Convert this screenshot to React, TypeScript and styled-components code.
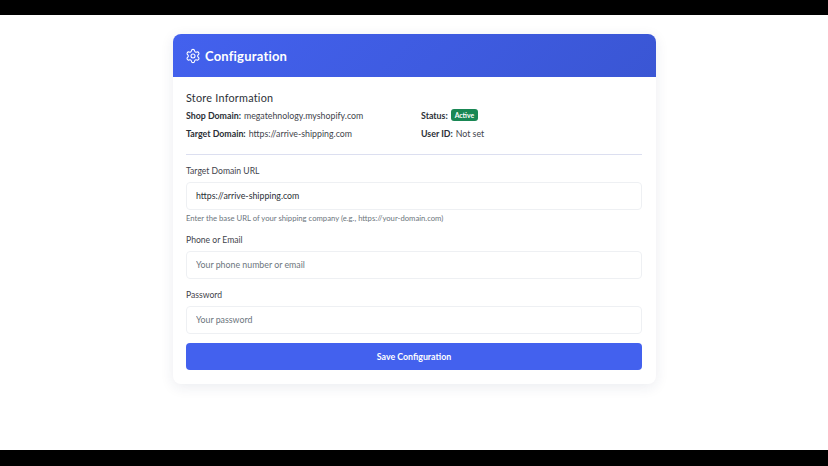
import React from 'react';
import styled, { createGlobalStyle } from 'styled-components';
import { Settings } from 'lucide-react';

const GlobalStyle = createGlobalStyle`
  html, body {
    margin: 0;
    height: 100%;
    background: #000;
    font-family: Lato, "Noto Sans", sans-serif;
  }
  #root {
    height: 100%;
  }
`;

const Screen = styled.div`
  height: 466px;
  display: flex;
  flex-direction: column;
  background: #000;
`;

const Page = styled.main`
  margin-top: 15px;
  height: 435px;
  box-sizing: border-box;
  padding-top: 19px;
  background: #fff;
  display: flex;
  flex-direction: column;
  align-items: center;
`;

const Card = styled.section`
  width: 483px;
  height: 350px;
  margin-left: 1px;
  border-radius: 8px;
  background: #fff;
  overflow: hidden;
  box-shadow: 0 3px 14px rgba(30, 40, 90, 0.09);
`;

const CardHeader = styled.header`
  height: 43px;
  padding: 0 12px;
  display: flex;
  align-items: center;
  gap: 4px;
  background: linear-gradient(135deg, #4361ee, #3a56d4);
  color: #fff;
`;

const CardTitle = styled.h1`
  margin: 0;
  font-size: 13px;
  font-weight: 700;
  line-height: 18px;
  letter-spacing: 0.2px;
`;

const CardBody = styled.div`
  padding: 13px 14px 13px 13px;
`;

const SectionTitle = styled.h2`
  margin: 0 0 2px;
  font-size: 10.8px;
  font-weight: 400;
  line-height: 16px;
  letter-spacing: 0.25px;
  color: #2b2f36;
`;

const InfoGrid = styled.div`
  display: grid;
  grid-template-columns: 235px 1fr;
  row-gap: 4px;
  padding-bottom: 14px;
  border-bottom: 1px solid #dcdff0;
  margin-bottom: 9px;
`;

const InfoItem = styled.div`
  display: flex;
  align-items: center;
  gap: 3px;
  height: 14px;
  font-size: 8.8px;
  color: #3f444c;
`;

const InfoLabel = styled.strong`
  font-weight: 700;
  color: #2b2f36;
`;

const Badge = styled.span`
  display: inline-flex;
  align-items: center;
  height: 12px;
  padding: 0 4px;
  border-radius: 3px;
  background: #198754;
  color: #fff;
  font-size: 6.8px;
  font-weight: 700;
`;

const Field = styled.div`
  margin-bottom: 9px;
`;

const FieldLabel = styled.label`
  display: block;
  padding-top: 1px;
  margin-bottom: 4px;
  font-size: 8.6px;
  line-height: 13px;
  color: #3f444c;
`;

const TextInput = styled.input`
  display: block;
  width: 100%;
  height: 28px;
  box-sizing: border-box;
  padding: 0 9px 2px;
  border: 1px solid #eef0f3;
  border-radius: 4px;
  background: #fff;
  font-family: inherit;
  font-size: 8.8px;
  color: #2b2f36;
  outline: none;

  &::placeholder {
    color: #6c757d;
    opacity: 1;
  }
`;

const Hint = styled.small`
  display: block;
  margin-top: 3px;
  font-size: 7.7px;
  line-height: 11px;
  color: #6c757d;
`;

const SaveButton = styled.button`
  display: block;
  width: 100%;
  height: 27px;
  margin-top: 9px;
  border: 0;
  border-radius: 4px;
  background: #4361ee;
  color: #fff;
  font-family: inherit;
  font-size: 8.8px;
  font-weight: 700;
`;

const App = () => {
  return (
    <Screen>
      <GlobalStyle />
      <Page>
        <Card>
          <CardHeader>
            <Settings size={16} strokeWidth={1.6} />
            <CardTitle>Configuration</CardTitle>
          </CardHeader>
          <CardBody>
            <SectionTitle>Store Information</SectionTitle>
            <InfoGrid>
              <InfoItem>
                <InfoLabel>Shop Domain:</InfoLabel> megatehnology.myshopify.com
              </InfoItem>
              <InfoItem>
                <InfoLabel>Status:</InfoLabel> <Badge>Active</Badge>
              </InfoItem>
              <InfoItem>
                <InfoLabel>Target Domain:</InfoLabel> https://arrive-shipping.com
              </InfoItem>
              <InfoItem>
                <InfoLabel>User ID:</InfoLabel> Not set
              </InfoItem>
            </InfoGrid>
            <Field>
              <FieldLabel>Target Domain URL</FieldLabel>
              <TextInput defaultValue="https://arrive-shipping.com" />
              <Hint>Enter the base URL of your shipping company (e.g., https://your-domain.com)</Hint>
            </Field>
            <Field>
              <FieldLabel>Phone or Email</FieldLabel>
              <TextInput placeholder="Your phone number or email" />
            </Field>
            <Field>
              <FieldLabel>Password</FieldLabel>
              <TextInput type="password" placeholder="Your password" />
            </Field>
            <SaveButton>Save Configuration</SaveButton>
          </CardBody>
        </Card>
      </Page>
    </Screen>
  );
};

export default App;
